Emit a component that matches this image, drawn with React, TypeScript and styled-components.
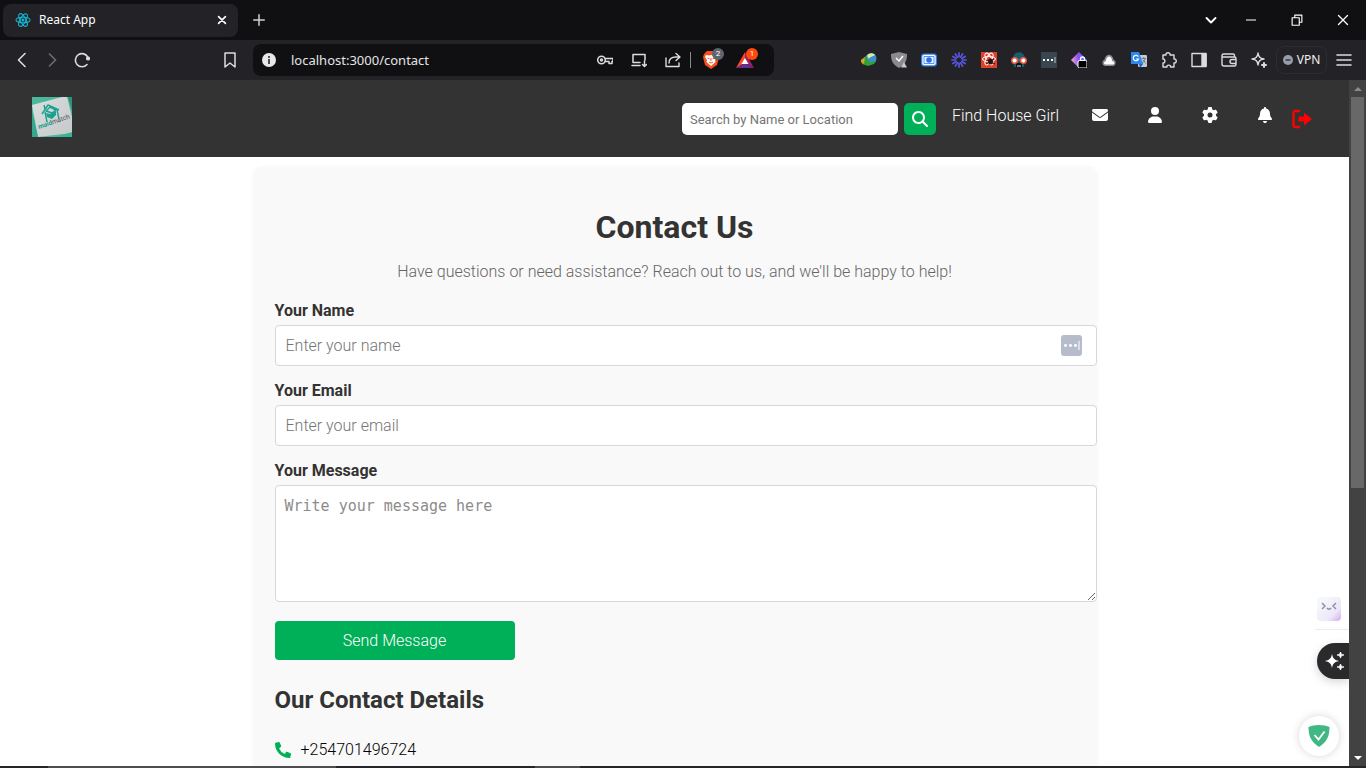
import React from 'react';
import styled, { createGlobalStyle } from 'styled-components';
import { FaPhoneAlt } from 'react-icons/fa';
import { FaMagnifyingGlass, FaEnvelope, FaUser, FaGear, FaBell } from 'react-icons/fa6';

const colors = {
  frame: '#101012',
  toolbar: '#232327',
  nav: '#333333',
  green: '#00b058',
  text: '#333333',
  muted: '#666666',
  card: '#f9f9f9',
  border: '#d8d8d8',
};

const GlobalStyle = createGlobalStyle`
  *, *::before, *::after { box-sizing: border-box; }
  body { margin: 0; font-family: Roboto, sans-serif; font-weight: 300; font-size: 16px; }
  button { font: inherit; border: 0; padding: 0; background: none; color: inherit; cursor: pointer; }
  h1, h2, p { margin: 0; }
  svg { display: block; flex: none; }
`;

const Window = styled.div`
  display: flex;
  flex-direction: column;
  height: 100vh;
  background: #fff;
  overflow: hidden;
`;

/* Browser frame */

const TabBar = styled.header`
  display: flex;
  align-items: center;
  height: 40px;
  flex: none;
  padding-left: 3px;
  background: ${colors.frame};
  color: #fff;
`;

const Tab = styled.div`
  display: flex;
  align-items: center;
  width: 235px;
  height: 33px;
  padding: 0 6px 0 12px;
  border-radius: 8px;
  background: ${colors.toolbar};
  font: 400 12px/16px 'Noto Sans', sans-serif;
`;

const TabTitle = styled.span`
  flex: 1;
  margin-left: 8px;
`;

const IconButton = styled.button<{ $width?: number }>`
  display: flex;
  align-items: center;
  justify-content: center;
  width: ${({ $width }) => $width ?? 30}px;
  height: 30px;
  flex: none;
`;

const TabClose = styled(IconButton)`
  width: 20px;
  height: 20px;
`;

const NewTab = styled(IconButton)`
  margin-left: 6px;
  color: #d0d0d0;
`;

const WindowControls = styled.div`
  display: flex;
  margin-left: auto;
`;

const Toolbar = styled.div`
  display: flex;
  align-items: center;
  height: 40px;
  flex: none;
  padding: 0 7px;
  background: ${colors.toolbar};
  color: #dcdcde;
`;

const Bookmark = styled(IconButton)`
  margin-left: 118px;
`;

const AddressBar = styled.div`
  display: flex;
  align-items: center;
  width: 521px;
  height: 32px;
  margin-left: 8px;
  padding: 0 12px 0 9px;
  border-radius: 8px;
  background: ${colors.frame};
`;

const AddressInput = styled.input`
  flex: 1;
  min-width: 0;
  margin-left: 15px;
  padding: 0;
  border: 0;
  outline: 0;
  background: none;
  color: #e4e4e6;
  font: 400 13px/20px 'Noto Sans', sans-serif;
`;

const AddressAction = styled(IconButton)`
  position: relative;
  width: 34px;
`;

const Divider = styled.span`
  width: 1px;
  height: 16px;
  margin-right: 3px;
  background: #8a8a8e;
`;

const CountBadge = styled.span<{ $color: string }>`
  position: absolute;
  top: 3px;
  right: 4px;
  width: 12px;
  height: 12px;
  border-radius: 50%;
  background: ${({ $color }) => $color};
  color: #fff;
  font: 400 8px/12px Roboto, sans-serif;
  text-align: center;
`;

const Extensions = styled.div`
  display: flex;
  align-items: center;
  margin-left: auto;
`;

const VpnButton = styled.button`
  display: flex;
  align-items: center;
  justify-content: center;
  gap: 4px;
  width: 51px;
  height: 28px;
  margin: 0 2px;
  border: 1px solid #2c2c31;
  border-radius: 8px;
  color: #f0f0f0;
  font: 400 12px/16px 'Noto Sans', sans-serif;
`;

/* Page area */

const Viewport = styled.div`
  position: relative;
  display: flex;
  flex: 1;
  min-height: 0;
`;

const Page = styled.div`
  position: relative;
  flex: 1;
  min-width: 0;
  overflow: hidden;
`;

const NavBar = styled.nav`
  display: flex;
  align-items: center;
  justify-content: space-between;
  height: 77px;
  padding: 0 32px;
  background: ${colors.nav};
  color: #fff;
`;

const LogoLink = styled.a`
  display: block;
  margin-bottom: 3px;
`;

const NavRight = styled.div`
  display: flex;
  align-items: center;
`;

const SearchForm = styled.form`
  display: flex;
  align-items: center;
  gap: 6px;
`;

const SearchInput = styled.input`
  width: 216px;
  height: 32px;
  padding: 1px 8px 0;
  border: 0;
  border-radius: 5px;
  background: #fff;
  font: 400 13px/16px Roboto, sans-serif;
  &::placeholder { color: #757575; opacity: 1; }
`;

const SearchButton = styled.button`
  display: grid;
  place-items: center;
  width: 32px;
  height: 32px;
  border-radius: 5px;
  background: ${colors.green};
  color: #fff;
`;

const NavLinks = styled.div`
  display: flex;
  align-items: center;
  margin: 0 12px 7px 16px;
`;

const NavLink = styled.a`
  color: #fff;
  text-decoration: none;
  margin-right: 13px;
`;

const NavIconLink = styled.a`
  display: flex;
  justify-content: center;
  width: 55px;
  color: #fff;
`;

const LogoutButton = styled.button`
  margin: 0 5px 0 -12px;
  color: #f00;
`;

const Card = styled.main`
  max-width: 844px;
  margin: 10px auto 0;
  padding: 40px 22px 60px;
  border-radius: 8px;
  background: ${colors.card};
  box-shadow: 0 0 4px rgba(0, 0, 0, 0.03);
`;

const Title = styled.h1`
  color: ${colors.text};
  font-size: 32px;
  font-weight: 700;
  line-height: 40px;
  text-align: center;
`;

const Intro = styled.p`
  margin: 15px 0 20px;
  color: ${colors.muted};
  line-height: 19px;
  text-align: center;
`;

const Field = styled.div`
  position: relative;
  width: calc(100% + 22px);
  margin-bottom: 15px;
`;

const Label = styled.label`
  display: block;
  margin-bottom: 5px;
  color: ${colors.text};
  font-weight: 700;
  line-height: 19px;
`;

const TextInput = styled.input`
  display: block;
  width: 100%;
  height: 41px;
  padding: 0 10px;
  border: 1px solid ${colors.border};
  border-radius: 4px;
  background: #fff;
  font: 300 16px/19px Roboto, sans-serif;
  &::placeholder { color: #757575; opacity: 1; }
`;

const MessageBox = styled.textarea`
  display: block;
  width: 100%;
  height: 117px;
  padding: 11px 9px;
  border: 1px solid ${colors.border};
  border-radius: 4px;
  background: #fff;
  font: 400 15px/19px 'DejaVu Sans Mono', monospace;
  &::placeholder { color: #8c8c8c; opacity: 1; }
`;

const FillHint = styled.button`
  position: absolute;
  right: 15px;
  bottom: 10px;
  display: flex;
  align-items: center;
  justify-content: center;
  width: 21px;
  height: 21px;
  border-radius: 3px;
  background: #b6bccb;
`;

const SubmitButton = styled.button`
  display: block;
  width: 30%;
  height: 39px;
  margin-top: 19px;
  border-radius: 4px;
  background: ${colors.green};
  color: #fff;
`;

const SectionTitle = styled.h2`
  margin: 24px 0;
  color: ${colors.text};
  font-size: 24px;
  font-weight: 700;
  line-height: 32px;
`;

const ContactRow = styled.p`
  display: flex;
  align-items: center;
  gap: 10px;
  color: #000;
  line-height: 19px;
  svg { color: ${colors.green}; }
`;

/* Scroll bar */

const ScrollBar = styled.div`
  display: flex;
  flex-direction: column;
  width: 17px;
  flex: none;
  background: #424242;
`;

const ScrollArrow = styled.div<{ $active?: boolean }>`
  display: grid;
  place-items: center;
  height: 17px;
  color: ${({ $active }) => ($active ? '#ffffff' : '#8a8a8a')};
`;

const ScrollTrack = styled.div`
  flex: 1;
  padding: 0 2px;
`;

const ScrollThumb = styled.div`
  height: 60%;
  background: #686868;
`;

/* Floating helpers */

const Mascot = styled.button`
  position: absolute;
  right: 8px;
  bottom: 145px;
  width: 24px;
  height: 24px;
  border-radius: 4px;
  background: linear-gradient(135deg, #f6f7fc 20%, #ece8f8 70%, #dba8ea 100%);
`;

const MascotLine = styled.div`
  position: absolute;
  right: 0;
  bottom: 136px;
  width: 34px;
  height: 1px;
  background: #ececec;
`;

const AssistTab = styled.button`
  position: absolute;
  right: 0;
  bottom: 87px;
  display: grid;
  place-items: center;
  width: 32px;
  height: 36px;
  padding-left: 3px;
  border-radius: 18px 0 0 18px;
  background: #2a2a2c;
  box-shadow: 0 3px 10px rgba(0, 0, 0, 0.16);
`;

const ShieldButton = styled.button`
  position: absolute;
  right: 10px;
  bottom: 10px;
  display: grid;
  place-items: center;
  width: 40px;
  height: 40px;
  border-radius: 50%;
  background: #fff;
  box-shadow: 0 0 8px rgba(0, 0, 0, 0.16);
`;

const TaskEdge = styled.div`
  display: flex;
  height: 2px;
  flex: none;
  background: #26262a;
`;

const EdgePart = styled.div<{ $grow: number; $light?: boolean }>`
  flex: ${({ $grow }) => $grow};
  background: ${({ $light }) => ($light ? '#4e4e52' : '#26262a')};
`;

/* Drawings */

type LineProps = { size?: number; width?: number; children: React.ReactNode };

const Line = ({ size = 16, width = 1.4, children }: LineProps) => (
  <svg width={size} height={size} viewBox="0 0 16 16" fill="none" stroke="currentColor"
    strokeWidth={width} strokeLinecap="round" strokeLinejoin="round" aria-hidden="true">
    {children}
  </svg>
);

const Picture = ({ children }: { children: React.ReactNode }) => (
  <svg width="16" height="16" viewBox="0 0 16 16" aria-hidden="true">{children}</svg>
);

const ReactMark = () => (
  <svg width="16" height="16" viewBox="0 0 16 16" fill="none" stroke="#16b3cf" strokeWidth="1.1" aria-hidden="true">
    <ellipse cx="8" cy="8" rx="7" ry="2.8" />
    <ellipse cx="8" cy="8" rx="7" ry="2.8" transform="rotate(60 8 8)" />
    <ellipse cx="8" cy="8" rx="7" ry="2.8" transform="rotate(120 8 8)" />
    <circle cx="8" cy="8" r="1.5" fill="#16b3cf" stroke="none" />
  </svg>
);

const MaidmatchLogo = () => (
  <svg width="40" height="40" viewBox="0 0 40 40" role="img" aria-label="maidmatch">
    <defs>
      <linearGradient id="paper" x1="0" y1="0" x2="1" y2="1">
        <stop offset="0" stopColor="#dcdfdf" />
        <stop offset="1" stopColor="#c4c8c9" />
      </linearGradient>
    </defs>
    <rect width="40" height="40" fill="#4cb79c" />
    <path d="M36 0h4v14z" fill="#2f8f7a" />
    <path d="M0 8L30 0h5l5 20v16L6 40z" fill="url(#paper)" />
    <path d="M0 14v26h6z" fill="#37a78c" />
    <path d="M24 40l16-5v5z" fill="#35b596" />
    <g fill="none" stroke="#18a18e" strokeWidth="1.4" strokeLinejoin="round">
      <path d="M10 17l6-9 11 5M13 15l2 10M25 13l2 9M12 8l1 4" />
      <path d="M14 14l4-4 6 3-4 3z" />
    </g>
    <path d="M14 16l4 1 6-3v4l-4 4-5-2z" fill="#18a18e" />
    <text x="7" y="32" transform="rotate(-19 7 32)" fontFamily="Roboto, sans-serif" fontWeight="700" fontSize="6.500">
      <tspan fill="#0f9a86">maid</tspan>
      <tspan fill="#474b4e" fontWeight="400">match</tspan>
    </text>
  </svg>
);

const LogoutMark = () => (
  <svg width="20" height="20" viewBox="0 0 20 20" aria-hidden="true">
    <path d="M8 2H3.500Q1.500 2 1.500 4v12q0 2 2 2H8" fill="none" stroke="currentColor" strokeWidth="2.400" />
    <path d="M6.500 7.500H12V3.500L20 10l-8 6.500v-4H6.500z" fill="currentColor" />
  </svg>
);

const InfoMark = () => (
  <svg width="14" height="14" viewBox="0 0 14 14" aria-hidden="true">
    <circle cx="7" cy="7" r="7" fill="#e8e8ea" />
    <circle cx="7" cy="3.9" r="1" fill="#222" />
    <path d="M7 6v5" stroke="#222" strokeWidth="1.6" />
  </svg>
);

const BraveMark = () => (
  <svg width="18" height="20" viewBox="0 0 18 20" aria-hidden="true">
    <path d="M5 1h8l3 3 1 3-2 8-6 4-6-4-2-8 1-3z" fill="#f4511e" />
    <path d="M4 5l3 .5L9 5l2 .5 3-.5 1 2-2 3 .5 2L9 16l-4.500-4 .5-2-2-3z" fill="#fff" />
    <path d="M5.500 8l2 .8M12.500 8l-2 .8M9 8v3M7 12l2 1 2-1" stroke="#f4511e" strokeWidth="1" fill="none" />
  </svg>
);

const RewardsMark = () => (
  <svg width="18" height="16" viewBox="0 0 18 16" aria-hidden="true">
    <path d="M9 0L0 16l9-5z" fill="#ff4724" />
    <path d="M9 0l9 16-9-5z" fill="#9e1f63" />
    <path d="M0 16h18l-9-5z" fill="#662d91" />
    <path d="M9 6l3.500 6h-7z" fill="#fff" />
  </svg>
);

const Rays = () => (
  <g stroke="#5a55e6" strokeWidth="1.7" strokeLinecap="round">
    {[0, 30, 60, 90, 120, 150, 180, 210, 240, 270, 300, 330].map((angle) => (
      <path key={angle} d="M8 4.800V.9" transform={`rotate(${angle} 8 8)`} />
    ))}
  </g>
);

const extensions: { name: string; icon: React.ReactNode }[] = [
  {
    name: 'Download manager',
    icon: (
      <Picture>
        <circle cx="10" cy="6.500" r="5.500" fill="#3c8fd0" />
        <path d="M6 4c2-4 7-3 8-1-2 2-5 1-6 4z" fill="#dfe9a0" />
        <path d="M0 8l5-4 1 3c1 2 2 3 4 3l5-1-2 3-6 2-6-2z" fill="#2fa22f" />
        <path d="M0 8l4-3-1 7-3-2z" fill="#e0a020" />
      </Picture>
    ),
  },
  {
    name: 'Site protection',
    icon: (
      <Picture>
        <path d="M8 0l8 2c0 6-1 10-8 14C1 12 0 8 0 2z" fill="#8b8b8d" />
        <path d="M5 6l3 3 4-5" stroke="#fff" strokeWidth="1.500" fill="none" />
        <path d="M13 10l3 5.500h-6z" fill="#c8c8ca" />
      </Picture>
    ),
  },
  {
    name: 'Screen capture',
    icon: (
      <Picture>
        <rect x="0" y="1.500" width="16" height="13" rx="3" fill="#2d7ff0" />
        <rect x="1.300" y="2.800" width="13.400" height="10.400" rx="2" fill="#fff" />
        <rect x="2.600" y="4" width="10.800" height="8" rx="1" fill="#2d7ff0" />
        <rect x="3.400" y="4.800" width="9.200" height="6.400" fill="#e9f1ff" />
        <circle cx="8" cy="8" r="2.800" fill="#2d6fe0" />
      </Picture>
    ),
  },
  { name: 'Loom', icon: <Picture><Rays /></Picture> },
  {
    name: 'React tools',
    icon: (
      <Picture>
        <rect width="16" height="16" fill="#e2402a" />
        <g fill="none" stroke="#fff" strokeWidth="1">
          <ellipse cx="8" cy="7" rx="6.500" ry="2.600" />
          <ellipse cx="8" cy="7" rx="6.500" ry="2.600" transform="rotate(60 8 7)" />
          <ellipse cx="8" cy="7" rx="6.500" ry="2.600" transform="rotate(120 8 7)" />
        </g>
        <ellipse cx="9.500" cy="9.500" rx="2.500" ry="3" fill="#2a1512" />
        <path d="M5 8l9 4M5 12l8-5" stroke="#2a1512" />
      </Picture>
    ),
  },
  {
    name: 'Reader',
    icon: (
      <Picture>
        <path d="M2 7c0-9 12-9 12 0l-1 8H3z" fill="#155e70" />
        <path d="M5 11h6v4H5z" fill="#111" />
        <circle cx="3.600" cy="8.500" r="2.800" fill="#fff" stroke="#ee5a40" strokeWidth="1.500" />
        <circle cx="12.400" cy="8.500" r="2.800" fill="#fff" stroke="#ee5a40" strokeWidth="1.500" />
        <path d="M6 8h4" stroke="#ee5a40" />
        <path d="M6 14h4" stroke="#bfe3ea" />
      </Picture>
    ),
  },
  {
    name: 'Password helper',
    icon: (
      <Picture>
        <rect width="16" height="16" fill="#38474f" />
        <path d="M2 7h2v2H2zM6 7h2v2H6zM10 7h2v2h-2z" fill="#fff" />
        <path d="M14 5v6" stroke="#b9c2c6" />
      </Picture>
    ),
  },
  {
    name: 'Privacy lock',
    icon: (
      <Picture>
        <defs>
          <linearGradient id="gem" x1="0" y1="0.6" x2="1" y2="0.4">
            <stop offset="0" stopColor="#f6b0c8" />
            <stop offset="0.5" stopColor="#8a4df2" />
            <stop offset="1" stopColor="#4a7cf4" />
          </linearGradient>
        </defs>
        <path d="M8 0l8 8-8 8-8-8z" fill="url(#gem)" />
        <rect x="7" y="8.500" width="9" height="7.500" rx="1.500" fill="#000" stroke="#fff" />
        <path d="M9.500 8.500V7a2 2 0 014 0v1.500" stroke="#fff" strokeWidth="1.300" fill="none" />
      </Picture>
    ),
  },
  {
    name: 'Cloud',
    icon: (
      <Picture>
        <path d="M3.500 14a3.500 3.500 0 010-6.500C4.500 1 11.500 1 12.500 7.500A3.500 3.500 0 0112.500 14z" fill="#8a8a8e" />
        <path d="M4.500 12.500c-2 0-2-3 .5-3.500 0-6 6-6 6 0 3 .5 3 3.500 1 3.500z" fill="#fff" />
      </Picture>
    ),
  },
  {
    name: 'Translate',
    icon: (
      <Picture>
        <rect x="7" y="3" width="9" height="12" rx="1" fill="#c5cbd2" />
        <path d="M0 0h8l4 12H0z" fill="#2d87ee" />
        <path d="M8 12h4l-3 4z" fill="#1b5fc0" />
        <path d="M7.300 4.600A2.700 2.700 0 107.500 7H5.200" stroke="#fff" strokeWidth="1.200" fill="none" />
        <path d="M10.500 6.500H15M12.700 5v1.500M14 7c-.5 2-1.500 3.500-3 4.500M12 8l3 3.500" stroke="#65717e" strokeWidth=".9" fill="none" />
      </Picture>
    ),
  },
  {
    name: 'Extensions',
    icon: (
      <Line>
        <path d="M2 3h3c-.8-3 4.800-3 4 0h4v4c3-.7 3 4.700 0 4v4H9.500c.7-2.500-4.200-2.500-3.500 0H2v-4c2.500.6 2.500-4.600 0-4z" />
      </Line>
    ),
  },
  {
    name: 'Side panel',
    icon: (
      <Line>
        <rect x="1" y="1.500" width="14" height="13" />
        <path d="M11 2h4v12h-4z" fill="currentColor" />
      </Line>
    ),
  },
  {
    name: 'Wallet',
    icon: (
      <Line>
        <path d="M13.500 5V3.500c0-1-.5-1.500-1.500-1.500H2.500C1.500 2 1 2.500 1 3.500V12c0 1.300.7 2 2 2h10.500c.8 0 1.500-.5 1.500-1.500v-6c0-1-.5-1.500-1.500-1.500H1.500M15 7.500h-4a2 2 0 000 4h4" />
      </Line>
    ),
  },
  {
    name: 'Assistant',
    icon: (
      <Line>
        <path d="M7 1c.6 4.200 1.800 5.400 6 6-4.200.6-5.400 1.800-6 6-.6-4.200-1.800-5.400-6-6 4.200-.6 5.400-1.800 6-6z" />
        <path d="M13 11v4M11 13h4" strokeWidth="2" />
      </Line>
    ),
  },
];

const fields = [
  { id: 'name', label: 'Your Name', type: 'text', placeholder: 'Enter your name', hint: true },
  { id: 'email', label: 'Your Email', type: 'email', placeholder: 'Enter your email', hint: false },
];

const navIcons = [
  { name: 'Messages', Icon: FaEnvelope },
  { name: 'Profile', Icon: FaUser },
  { name: 'Settings', Icon: FaGear },
  { name: 'Notifications', Icon: FaBell },
];

const BrowserFrame = () => (
  <>
    <TabBar>
      <Tab>
        <ReactMark />
        <TabTitle>React App</TabTitle>
        <TabClose aria-label="Close tab">
          <Line size={10} width={2.6}><path d="M2.500 2.500l11 11M13.500 2.500l-11 11" /></Line>
        </TabClose>
      </Tab>
      <NewTab aria-label="New tab">
        <Line size={12} width={2}><path d="M8 1v14M1 8h14" /></Line>
      </NewTab>
      <WindowControls>
        <IconButton $width={34} aria-label="Search tabs">
          <Line width={1.9}><path d="M3.500 6L8 10.500 12.500 6" /></Line>
        </IconButton>
        <IconButton $width={46} aria-label="Minimize">
          <Line size={10} width={1.7}><path d="M0 8h16" /></Line>
        </IconButton>
        <IconButton $width={46} aria-label="Restore">
          <Line size={12} width={1.5}><path d="M1.500 5h9.500v10H1.500zM5 5V1.500h9.500V11H11" /></Line>
        </IconButton>
        <IconButton $width={46} aria-label="Close">
          <Line size={12} width={1.7}><path d="M2 2l12 12M14 2L2 14" /></Line>
        </IconButton>
      </WindowControls>
    </TabBar>
    <Toolbar>
      <IconButton aria-label="Back">
        <Line width={1.6}><path d="M11 1.500L4.500 8l6.500 6.500" /></Line>
      </IconButton>
      <IconButton aria-label="Forward">
        <svg width="16" height="16" viewBox="0 0 16 16" fill="none" stroke="#6c6c70" strokeWidth="1.600" aria-hidden="true">
          <path d="M5 1.500L11.500 8 5 14.500" />
        </svg>
      </IconButton>
      <IconButton aria-label="Reload">
        <Line width={1.6}>
          <path d="M13 12.500A6.600 6.600 0 1114 5.500" />
          <circle cx="14" cy="6.500" r="1.300" fill="currentColor" />
        </Line>
      </IconButton>
      <Bookmark aria-label="Bookmark">
        <Line width={1.5}><path d="M3 1h10v14l-5-4-5 4z" /></Line>
      </Bookmark>
      <AddressBar>
        <InfoMark />
        <AddressInput aria-label="Address" defaultValue="localhost:3000/contact" />
        <AddressAction aria-label="Passwords">
          <Line width={1.5}>
            <circle cx="4.500" cy="8" r="3.800" />
            <circle cx="4.500" cy="8" r="1" />
            <path d="M8.300 6.500H16v3h-1v2h-3v-2H8.300" />
          </Line>
        </AddressAction>
        <AddressAction aria-label="Install app">
          <Line width={1.5}><path d="M9 13.500H1M2 10.500v-8h12V8M2 10.500h7M13.500 9v5M11.500 12.500l2 2 2-2" /></Line>
        </AddressAction>
        <AddressAction aria-label="Share">
          <Line width={1.4}><path d="M1 6v8.500h13V11M4 11c0-4 3-6 7-6h3M11 1.500L15 5l-4 3.500" /></Line>
        </AddressAction>
        <Divider />
        <AddressAction aria-label="Shields">
          <BraveMark />
          <CountBadge $color="#5f6470">2</CountBadge>
        </AddressAction>
        <AddressAction aria-label="Rewards">
          <RewardsMark />
          <CountBadge $color="#ff4a0c">1</CountBadge>
        </AddressAction>
      </AddressBar>
      <Extensions>
        {extensions.map(({ name, icon }) => (
          <IconButton key={name} aria-label={name}>{icon}</IconButton>
        ))}
        <VpnButton>
          <svg width="10" height="10" viewBox="0 0 10 10" aria-hidden="true">
            <circle cx="5" cy="5" r="5" fill="#989daa" />
            <path d="M2.500 5h5" stroke="#2a2a2e" strokeWidth="1.300" />
          </svg>
          VPN
        </VpnButton>
        <IconButton aria-label="Menu">
          <Line width={1.6}><path d="M1 3h14M1 8h14M1 13h14" /></Line>
        </IconButton>
      </Extensions>
    </Toolbar>
  </>
);

const SiteNav = () => (
  <NavBar>
    <LogoLink href="#home"><MaidmatchLogo /></LogoLink>
    <NavRight>
      <SearchForm>
        <SearchInput type="search" aria-label="Search" placeholder="Search by Name or Location" />
        <SearchButton type="button" aria-label="Search"><FaMagnifyingGlass size={16} /></SearchButton>
      </SearchForm>
      <NavLinks>
        <NavLink href="#find">Find House Girl</NavLink>
        {navIcons.map(({ name, Icon }) => (
          <NavIconLink key={name} href={`#${name.toLowerCase()}`} aria-label={name}>
            <Icon size={16} />
          </NavIconLink>
        ))}
      </NavLinks>
      <LogoutButton aria-label="Log out"><LogoutMark /></LogoutButton>
    </NavRight>
  </NavBar>
);

const ContactCard = () => (
  <Card>
    <Title>Contact Us</Title>
    <Intro>Have questions or need assistance? Reach out to us, and we'll be happy to help!</Intro>
    <form>
      {fields.map(({ id, label, type, placeholder, hint }) => (
        <Field key={id}>
          <Label htmlFor={id}>{label}</Label>
          <TextInput id={id} type={type} placeholder={placeholder} />
          {hint && (
            <FillHint type="button" aria-label="Fill in">
              <svg width="17" height="9" viewBox="0 0 17 9" fill="#fff" aria-hidden="true">
                <circle cx="2.500" cy="4.500" r="1.400" />
                <circle cx="7.500" cy="4.500" r="1.400" />
                <circle cx="12.500" cy="4.500" r="1.400" />
                <path d="M15.500 0h1v9h-1z" />
              </svg>
            </FillHint>
          )}
        </Field>
      ))}
      <Field>
        <Label htmlFor="message">Your Message</Label>
        <MessageBox id="message" placeholder="Write your message here" />
      </Field>
      <SubmitButton type="button">Send Message</SubmitButton>
    </form>
    <SectionTitle>Our Contact Details</SectionTitle>
    <ContactRow><FaPhoneAlt size={16} />+254701496724</ContactRow>
  </Card>
);

const FloatingHelpers = () => (
  <>
    <Mascot aria-label="Helper">
      <svg width="24" height="24" viewBox="0 0 24 24" fill="none" stroke="#8f93a3" strokeWidth="1.500" aria-hidden="true">
        <path d="M5 6l3 3-3 3M19 6l-3 3 3 3M10 11c1 1.500 3 1.500 4 0" />
      </svg>
    </Mascot>
    <MascotLine />
    <AssistTab aria-label="Assistant">
      <svg width="19" height="20" viewBox="0 0 19 20" fill="#fff" aria-hidden="true">
        <path d="M7 3c1 4.600 2.400 6 7 7-4.600 1-6 2.400-7 7-1-4.600-2.400-6-7-7 4.600-1 6-2.400 7-7z" />
        <path d="M15.500 1c.5 2 1.300 2.700 3.500 3-2.200.3-3 1-3.500 3-.5-2-1.300-2.700-3.500-3 2.200-.3 3-1 3.500-3zM15.500 13c.5 2 1.300 2.700 3.500 3-2.200.3-3 1-3.500 3-.5-2-1.300-2.700-3.500-3 2.200-.3 3-1 3.500-3z" stroke="#fff" strokeWidth=".8" />
      </svg>
    </AssistTab>
    <ShieldButton aria-label="Protection">
      <svg width="22" height="22" viewBox="0 0 22 22" aria-hidden="true">
        <path d="M11 0c4 0 8 .8 10.500 2C21.500 11 19 17 11 22 3 17 .5 11 .5 2 3 .8 7 0 11 0z" fill="#41b883" />
        <path d="M6.500 10l4 4.500 6-8" stroke="#fff" strokeWidth="1.800" fill="none" />
      </svg>
    </ShieldButton>
  </>
);

const App = () => (
  <Window>
    <GlobalStyle />
    <BrowserFrame />
    <Viewport>
      <Page>
        <SiteNav />
        <ContactCard />
        <FloatingHelpers />
      </Page>
      <ScrollBar aria-hidden="true">
        <ScrollArrow>
          <svg width="8" height="4" viewBox="0 0 8 4"><path d="M0 4l4-4 4 4z" fill="currentColor" /></svg>
        </ScrollArrow>
        <ScrollTrack><ScrollThumb /></ScrollTrack>
        <ScrollArrow $active>
          <svg width="8" height="4" viewBox="0 0 8 4"><path d="M0 0l4 4 4-4z" fill="currentColor" /></svg>
        </ScrollArrow>
      </ScrollBar>
    </Viewport>
    <TaskEdge>
      <EdgePart $grow={48} />
      <EdgePart $grow={288} $light />
      <EdgePart $grow={199} />
      <EdgePart $grow={45} $light />
      <EdgePart $grow={786} />
    </TaskEdge>
  </Window>
);

export default App;
